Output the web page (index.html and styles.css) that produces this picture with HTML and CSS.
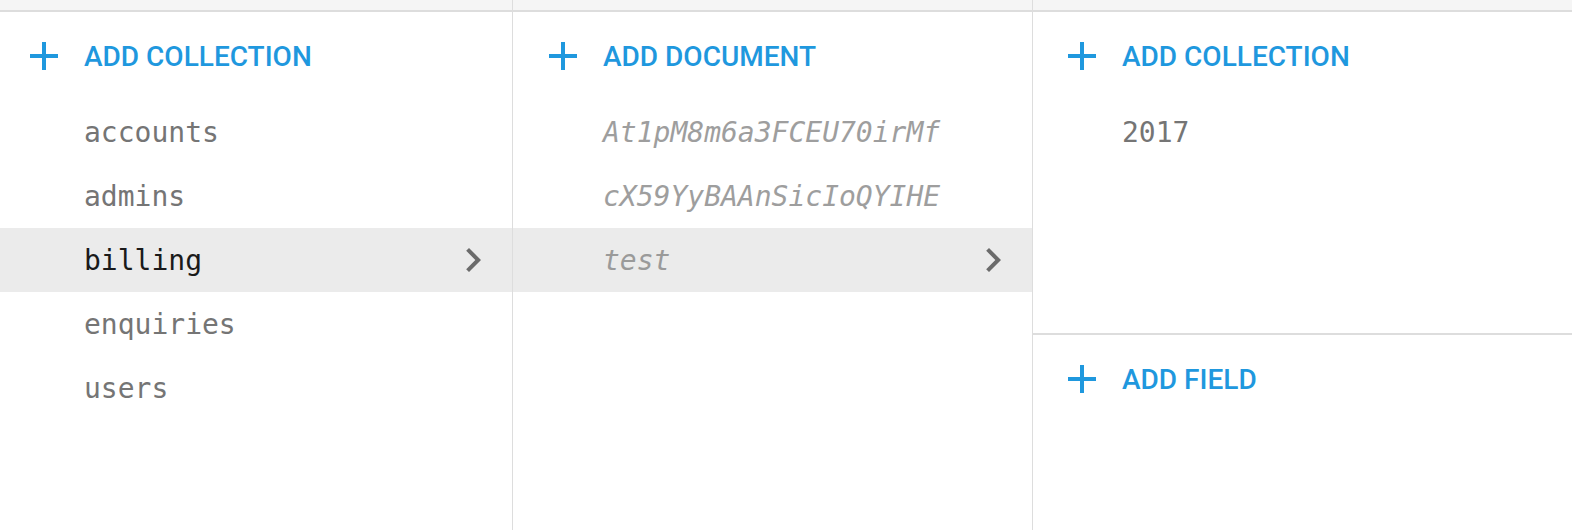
FILE: index.html
```html
<!DOCTYPE html>
<html lang="en">
<head>
<meta charset="utf-8">
<title>Firestore data</title>
<link rel="stylesheet" href="styles.css">
</head>
<body>
<div class="panes">
  <section class="pane pane-a">
    <div class="pane-top"></div>
    <button class="add-btn">
      <svg class="icon" viewBox="0 0 24 24"><path d="M19 13h-6v6h-2v-6H5v-2h6V5h2v6h6v2z"/></svg>
      <span>Add collection</span>
    </button>
    <ul class="list">
      <li class="item">accounts</li>
      <li class="item">admins</li>
      <li class="item selected"><span>billing</span><svg class="chev" viewBox="0 0 24 24"><path d="M10 6L8.59 7.41 13.17 12l-4.58 4.59L10 18l6-6z"/></svg></li>
      <li class="item">enquiries</li>
      <li class="item">users</li>
    </ul>
  </section>
  <section class="pane pane-b">
    <div class="pane-top"></div>
    <button class="add-btn">
      <svg class="icon" viewBox="0 0 24 24"><path d="M19 13h-6v6h-2v-6H5v-2h6V5h2v6h6v2z"/></svg>
      <span>Add document</span>
    </button>
    <ul class="list docs">
      <li class="item">At1pM8m6a3FCEU70irMf</li>
      <li class="item">cX59YyBAAnSicIoQYIHE</li>
      <li class="item selected"><span>test</span><svg class="chev" viewBox="0 0 24 24"><path d="M10 6L8.59 7.41 13.17 12l-4.58 4.59L10 18l6-6z"/></svg></li>
    </ul>
  </section>
  <section class="pane pane-c">
    <div class="pane-top"></div>
    <div class="sub">
      <button class="add-btn">
        <svg class="icon" viewBox="0 0 24 24"><path d="M19 13h-6v6h-2v-6H5v-2h6V5h2v6h6v2z"/></svg>
        <span>Add collection</span>
      </button>
      <ul class="list">
        <li class="item">2017</li>
      </ul>
    </div>
    <div class="fields">
      <button class="add-btn">
        <svg class="icon" viewBox="0 0 24 24"><path d="M19 13h-6v6h-2v-6H5v-2h6V5h2v6h6v2z"/></svg>
        <span>Add field</span>
      </button>
    </div>
  </section>
</div>
</body>
</html>
```
FILE: styles.css
```css
* { box-sizing: border-box; }
html, body {
  margin: 0;
  padding: 0;
  background: #ffffff;
  overflow: hidden;
}
.panes {
  display: flex;
  height: 530px;
}
.pane {
  display: flex;
  flex-direction: column;
  border-right: 1px solid #dddddd;
  --pad: 22px;
}
.pane-a { width: 513px; --pad: 20px; }
.pane-b { width: 520px; --pad: 26px; }
.pane-c { flex: 1; border-right: none; --pad: 25px; }

.pane-top {
  height: 12px;
  background: #f5f5f5;
  border-bottom: 2px solid #dddddd;
  flex: none;
}

.add-btn {
  display: flex;
  align-items: center;
  gap: 16px;
  height: 88px;
  padding: 0 0 0 var(--pad);
  margin: 0;
  border: none;
  background: transparent;
  font-family: Roboto, "Noto Sans", sans-serif;
  font-weight: 500;
  font-size: 28px;
  text-transform: uppercase;
  color: #1f98de;
  cursor: pointer;
  width: 100%;
  text-align: left;
}
.add-btn .icon {
  width: 48px;
  height: 48px;
  fill: #1f98de;
  flex: none;
}

.list {
  list-style: none;
  margin: 0;
  padding: 0;
}
.item {
  display: flex;
  align-items: center;
  justify-content: space-between;
  height: 64px;
  padding: 0 15px 0 calc(var(--pad) + 64px);
  font-family: "DejaVu Sans Mono", "Liberation Mono", monospace;
  font-size: 28px;
  color: #757575;
}
.item.selected {
  background: #ebebeb;
  color: #1a1a1a;
}
.docs .item {
  font-style: italic;
  color: #9e9e9e;
}
.docs .item.selected { color: #9a9a9a; }
.chev {
  width: 48px;
  height: 48px;
  fill: #6b6b6b;
  flex: none;
}

.sub {
  height: 323px;
  border-bottom: 2px solid #dddddd;
  flex: none;
}
.fields { flex: 1; }
```
